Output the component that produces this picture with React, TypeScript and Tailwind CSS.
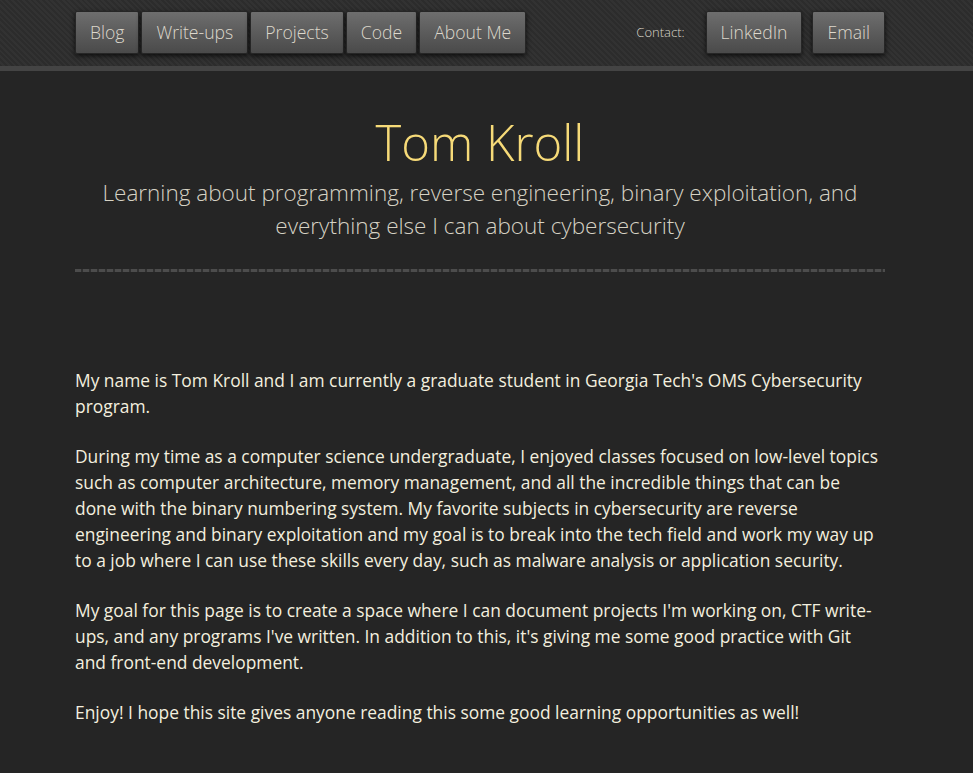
import React from "react";

const navItems = ["Blog", "Write-ups", "Projects", "Code", "About Me"];
const contactItems = ["LinkedIn", "Email"];

const btn =
  "h-[43px] px-[14px] rounded-[2px] border border-[#262626] bg-gradient-to-b from-[#6e6e6e] to-[#4a4a4a] text-[17.6px] font-light text-[#ddd8cc] shadow-[0_2px_5px_rgba(0,0,0,0.7)] flex items-center";

const NavBar = () => {
  return (
    <div className="w-full h-[71px] border-b-[5px] border-[#444444] bg-[repeating-linear-gradient(45deg,#2c2c2c_0px,#2c2c2c_2px,#323232_2px,#323232_4px)]">
      <div className="w-[810px] mx-[75px] pt-[11px] flex items-start">
        <div className="flex gap-[2px]">
          {navItems.map((item) => (
            <a key={item} className={btn}>
              {item}
            </a>
          ))}
        </div>
        <div className="ml-auto flex items-center gap-[10px]">
          <span className="text-[13px] font-light text-[#d8d4c8] mr-[11px]">Contact:</span>
          {contactItems.map((item) => (
            <a key={item} className={btn}>
              {item}
            </a>
          ))}
        </div>
      </div>
    </div>
  );
};

export default function App() {
  return (
    <div className="min-h-[773px] bg-[#252525] font-['Open_Sans',sans-serif]">
      <NavBar />
      <div className="w-[810px] ml-[75px]">
        <div className="text-center pt-[41px]">
          <h1 className="text-[49px] leading-[60px] font-light text-[#f6da78]">Tom Kroll</h1>
          <p className="text-[22.5px] leading-[33px] font-light text-[#d6d2c4] mt-[4px]">
            Learning about programming, reverse engineering, binary exploitation, and
            <br />
            everything else I can about cybersecurity
          </p>
        </div>
        <div className="mt-[27px] h-[3px] bg-[repeating-linear-gradient(90deg,#4c4c4c_0px,#4c4c4c_6px,#303030_6px,#303030_8px)]"></div>
        <div className="pt-[95px] text-[17.4px] leading-[26px] text-[#f3efdf] flex flex-col gap-[24px]">
          <p>
            My name is Tom Kroll and I am currently a graduate student in Georgia Tech's OMS
            Cybersecurity program.
          </p>
          <p>
            During my time as a computer science undergraduate, I enjoyed classes focused on
            low-level topics such as computer architecture, memory management, and all the
            incredible things that can be done with the binary numbering system. My favorite
            subjects in cybersecurity are reverse engineering and binary exploitation and my
            goal is to break into the tech field and work my way up to a job where I can use
            these skills every day, such as malware analysis or application security.
          </p>
          <p>
            My goal for this page is to create a space where I can document projects I'm
            working on, CTF write-ups, and any programs I've written. In addition to this, it's
            giving me some good practice with Git and front-end development.
          </p>
          <p>
            Enjoy! I hope this site gives anyone reading this some good learning opportunities
            as well!
          </p>
        </div>
      </div>
    </div>
  );
}
